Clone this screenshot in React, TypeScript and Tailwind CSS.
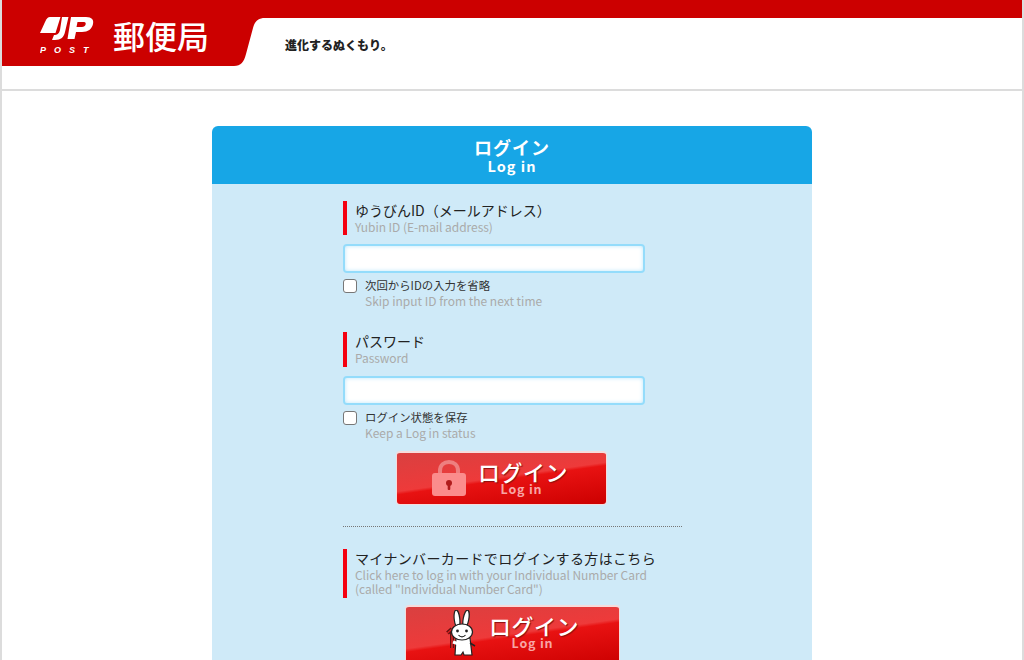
const fontStack = { fontFamily: '"Noto Sans CJK JP", "Noto Sans", sans-serif' };

function JpLogo() {
  return (
    <svg width="60" height="40" viewBox="0 0 60 40" className="shrink-0">
      <path d="M10 1H20.5L15.5 17H0L5.5 5C6.8 2.4 8 1 10 1Z" fill="#fff" />
      <path d="M22 1H28.5L25 16C24 21 21 24 15 24H12L14 19C17 19 19 18 20 14Z" fill="#fff" />
      <path d="M31 1H46C52 1 54 4 53 8C52 13 48 16 42 16H36L34.5 23H27.5ZM37.5 6L36.5 11H42C46 11 47 6 44 6Z" fill="#fff" fillRule="evenodd" />
      <text x="0" y="37" fill="#fff" fontSize="9" fontStyle="italic" fontWeight="700" letterSpacing="8" fontFamily="Liberation Sans">POST</text>
    </svg>
  );
}

function Swoosh() {
  return (
    <svg width="70" height="66" viewBox="0 0 70 66" className="shrink-0">
      <path d="M0 0H70V18H58C51 18 48 21 46 28L39 54C37 62 34 66 27 66H0Z" fill="#cc0000" />
    </svg>
  );
}

function Header() {
  return (
    <header className="h-[91px] border-b-[2px] border-[#dcdcdc]">
      <div className="flex h-[66px] bg-[linear-gradient(#cc0000_18px,#fff_18px)]">
        <div className="flex w-[205px] items-start gap-[13px] bg-[#cc0000] pt-[16px] pl-[38px]">
          <JpLogo />
          <span className="text-[32px] leading-[38px] font-medium whitespace-nowrap text-white">郵便局</span>
        </div>
        <Swoosh />
        <div className="pt-[36px] pl-[8px] text-[12px] leading-[18px] font-black whitespace-nowrap text-[#222]">進化するぬくもり。</div>
      </div>
    </header>
  );
}

function FieldLabel({ ja, en, barHeight, jaClass = '' }: { ja: string; en: React.ReactNode; barHeight: string; jaClass?: string }) {
  return (
    <div className={`flex gap-[8px] ${barHeight}`}>
      <div className="w-[4px] bg-[#f50010]" />
      <div className="-mt-[1px]">
        <div className={`text-[14px] leading-[20px] whitespace-nowrap text-[#222] ${jaClass}`}>{ja}</div>
        <div className="text-[12px] leading-[14px] tracking-[-0.05px] text-[#aaaaaa]">{en}</div>
      </div>
    </div>
  );
}

function TextBox() {
  return <input className="block h-[29px] w-[302px] rounded-[4px] border-[2px] border-[#94dcfb] bg-white shadow-[inset_0_0_4px_#bce6fb] outline-none" />;
}

function Remember({ ja, en }: { ja: string; en: string }) {
  return (
    <div className="mt-[6px] flex gap-[8px]">
      <span className="h-[14px] w-[14px] shrink-0 rounded-[3px] border border-[#777] bg-white" />
      <div className="-mt-[1px]">
        <div className="text-[11.4px] leading-[15px] whitespace-nowrap text-[#333]">{ja}</div>
        <div className="text-[12px] leading-[16px] whitespace-nowrap text-[#aaaaaa]">{en}</div>
      </div>
    </div>
  );
}

function LockIcon() {
  return (
    <svg width="36" height="36" viewBox="0 0 36 36" className="mt-[7px] shrink-0">
      <path d="M9 16V11C9 5 13 2 18 2C23 2 27 5 27 11V16" fill="none" stroke="#ee7f7f" strokeWidth="4" />
      <rect x="1" y="13" width="34" height="23" rx="3" fill="#fb8c8c" />
      <circle cx="18" cy="23" r="3" fill="#b01c1c" />
      <rect x="16.7" y="24" width="2.6" height="6" rx="1" fill="#b01c1c" />
    </svg>
  );
}

function RabbitIcon() {
  return (
    <svg width="32" height="48" viewBox="0 0 32 48" className="mt-[3px] shrink-0">
      <path d="M6 20V38M1.5 23L6 19" fill="none" stroke="#5e0f0f" strokeWidth="4" />
      <path d="M6 20V38M1.5 23L6 19" fill="none" stroke="#d92222" strokeWidth="1.6" />
      <ellipse cx="11" cy="9" rx="2.8" ry="9" fill="#fff" stroke="#222" strokeWidth="1.2" transform="rotate(-6 11 9)" />
      <ellipse cx="20" cy="9" rx="2.8" ry="9" fill="#fff" stroke="#222" strokeWidth="1.2" transform="rotate(10 20 9)" />
      <path d="M10 28H24L26 45H18L17 42L15 45H9Z" fill="#fff" stroke="#222" strokeWidth="1.2" />
      <ellipse cx="16" cy="22" rx="10.5" ry="8" fill="#fff" stroke="#222" strokeWidth="1.2" />
      <circle cx="11.5" cy="21" r="1.4" fill="#222" />
      <circle cx="20.5" cy="21" r="1.4" fill="#222" />
      <path d="M12.5 25C14.5 27.5 17.5 27.5 19.5 25" fill="none" stroke="#222" strokeWidth="1.2" />
      <path d="M7 32L13 34" stroke="#fff" strokeWidth="3" />
      <path d="M24 33L29 36" stroke="#222" strokeWidth="1.5" />
    </svg>
  );
}

function RedButton({ icon, width, height, className, gap }: { icon: React.ReactNode; width: string; height: string; className: string; gap: string }) {
  return (
    <div className={`relative flex overflow-hidden rounded-[4px] border-x border-t-[2px] border-b border-[#f6dcdc] ${width} ${height} ${className}`}>
      <div className="absolute inset-0 bg-[linear-gradient(172deg,#d94040_0%,#ee3a3a_48%,#e81212_52%,#cc0000_100%)]" />
      <div className={`relative flex items-start ${gap}`}>
        {icon}
        <div className="mt-[7px] flex flex-col items-center">
          <span className="text-[22px] leading-[22px] font-medium tracking-[0.5px] whitespace-nowrap text-white [text-shadow:1px_1px_1px_#8a1010]">ログイン</span>
          <span className="mt-[2px] -ml-[3px] text-[12.5px] leading-[10px] font-bold tracking-[0.8px] text-[#f8a5a5]">Log in</span>
        </div>
      </div>
    </div>
  );
}

export default function App() {
  return (
    <div className="h-[660px] overflow-hidden border-x-[2px] border-[#dcdcdc] bg-white" style={fontStack}>
      <Header />
      <main className="flex justify-center pt-[35px]">
        <section className="w-[600px]">
          <div className="flex h-[58px] flex-col items-center rounded-t-[6px] bg-[#17a6e6] pt-[11px] text-white">
            <div className="text-[18px] leading-[20px] font-bold tracking-[1px]">ログイン</div>
            <div className="text-[14.5px] leading-[17px] font-bold tracking-[1px]">Log in</div>
          </div>
          <div className="h-[480px] bg-[#cfeaf8] pt-[17px] pl-[131px]">
            <FieldLabel ja="ゆうびんID（メールアドレス）" en="Yubin ID (E-mail address)" barHeight="h-[34px]" />
            <div className="mt-[9px]"><TextBox /></div>
            <Remember ja="次回からIDの入力を省略" en="Skip input ID from the next time" />
            <div className="mt-[23px]">
              <FieldLabel ja="パスワード" en="Password" barHeight="h-[35px]" />
            </div>
            <div className="mt-[9px]"><TextBox /></div>
            <Remember ja="ログイン状態を保存" en="Keep a Log in status" />
            <RedButton
              icon={<LockIcon />}
              width="w-[211px]"
              height="h-[54px]"
              className="mt-[10px] ml-[53px]"
              gap="gap-[11px] pl-[34px]"
            />
            <div className="mt-[21px] w-[339px] border-t border-dotted border-[#777]" />
            <div className="mt-[22px]">
              <FieldLabel
                ja="マイナンバーカードでログインする方はこちら"
                jaClass="tracking-[0.35px]"
                en={<>Click here to log in with your Individual Number Card<br />(called "Individual Number Card")</>}
                barHeight="h-[49px]"
              />
            </div>
            <RedButton
              icon={<RabbitIcon />}
              width="w-[215px]"
              height="h-[60px]"
              className="mt-[7px] ml-[62px]"
              gap="gap-[11px] pl-[40px]"
            />
          </div>
        </section>
      </main>
    </div>
  );
}
